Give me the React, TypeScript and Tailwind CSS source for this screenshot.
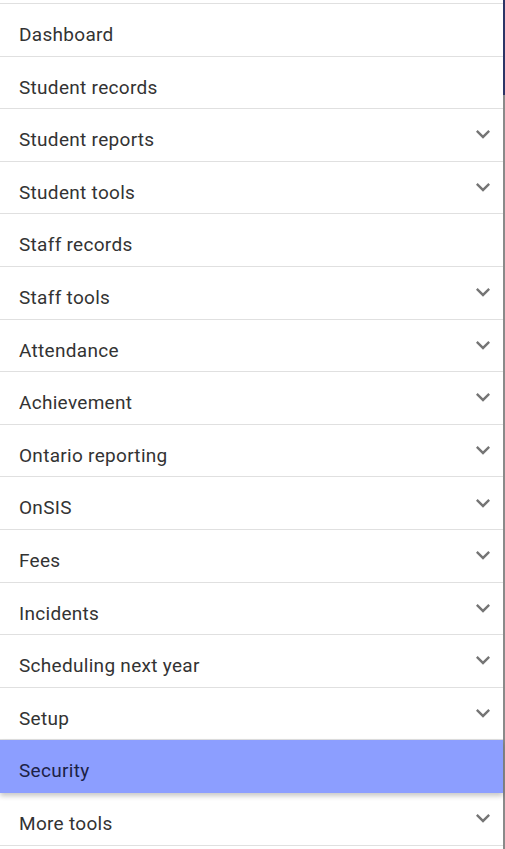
const items: { label: string; expandable: boolean; active?: boolean }[] = [
  { label: "Dashboard", expandable: false },
  { label: "Student records", expandable: false },
  { label: "Student reports", expandable: true },
  { label: "Student tools", expandable: true },
  { label: "Staff records", expandable: false },
  { label: "Staff tools", expandable: true },
  { label: "Attendance", expandable: true },
  { label: "Achievement", expandable: true },
  { label: "Ontario reporting", expandable: true },
  { label: "OnSIS", expandable: true },
  { label: "Fees", expandable: true },
  { label: "Incidents", expandable: true },
  { label: "Scheduling next year", expandable: true },
  { label: "Setup", expandable: true },
  { label: "Security", expandable: false, active: true },
  { label: "More tools", expandable: true },
];

function ExpandMore() {
  return (
    <svg width="28" height="28" viewBox="0 0 24 24" className="fill-[#757575]">
      <path d="M16.59 8.59L12 13.17 7.41 8.59 6 10l6 6 6-6z" />
    </svg>
  );
}

export default function App() {
  return (
    <div className="flex h-[849px] w-[505px] overflow-hidden bg-white font-['Roboto',sans-serif]">
      <nav className="flex w-[503px] flex-col">
        <div className="h-[4px] shrink-0 border-b border-[#e0e0e0]" />
        {items.map((item) => (
          <div
            key={item.label}
            className={
              item.active
                ? "relative z-10 box-border flex h-[52.6px] shrink-0 items-start justify-between bg-[#8c9eff] pl-[19px] pr-[6px] pt-[17px] text-[#1c2246] shadow-[0_3px_5px_rgba(0,0,0,0.22)]"
                : "box-border flex h-[52.6px] shrink-0 items-start justify-between border-b border-[#e0e0e0] pl-[19px] pr-[6px] pt-[17px] text-[#333333]"
            }
          >
            <span className="text-[19px] leading-[27px] tracking-[0.3px]">{item.label}</span>
            {item.expandable && (
              <span className="self-center -mt-[18px]">
                <ExpandMore />
              </span>
            )}
          </div>
        ))}
      </nav>
      <div className="flex w-[2px] flex-col">
        <div className="h-[95px] bg-[#2c3566]" />
        <div className="flex-1 bg-[#8a8a8a]" />
      </div>
    </div>
  );
}
